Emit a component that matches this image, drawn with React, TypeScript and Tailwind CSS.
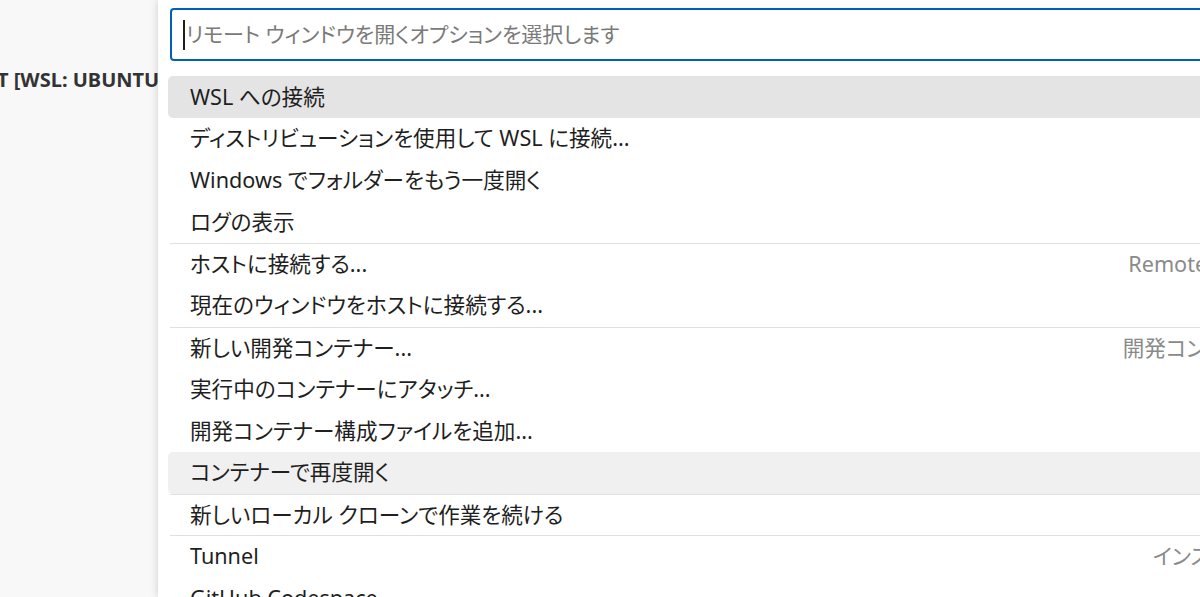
import React from 'react';

type Item = {
  label: string;
  detail?: string;
  sep?: boolean;
  bg?: string;
  dpr?: string;
};

const items: Item[] = [
  { label: 'WSL への接続', bg: 'bg-[#e4e4e4]' },
  { label: 'ディストリビューションを使用して WSL に接続...' },
  { label: 'Windows でフォルダーをもう一度開く' },
  { label: 'ログの表示' },
  { label: 'ホストに接続する...', detail: 'Remote - SSH', sep: true, dpr: '-mr-[3px]' },
  { label: '現在のウィンドウをホストに接続する...' },
  { label: '新しい開発コンテナー...', detail: '開発コンテナー', sep: true, dpr: '-mr-[5px]' },
  { label: '実行中のコンテナーにアタッチ...' },
  { label: '開発コンテナー構成ファイルを追加...' },
  { label: 'コンテナーで再度開く', bg: 'bg-[#f0f0f0]' },
  { label: '新しいローカル クローンで作業を続ける', sep: true },
  { label: 'Tunnel', detail: 'インストール', sep: true, dpr: '-mr-[6px]' },
  { label: 'GitHub Codespace' },
];

function Row({ item }: { item: Item }) {
  return (
    <div className={`h-[41.75px] ${item.sep ? 'border-t border-[#e0e0e0] ml-[2px]' : ''}`}>
      <div
        className={`h-full flex items-center rounded-[5px] pl-[22px] pr-[6px] ${item.sep ? '-ml-[2px]' : ''} ${item.bg ?? ''}`}
      >
        <span className="whitespace-nowrap text-[#1f1f1f]">{item.label}</span>
        {item.detail && (
          <span className={`ml-auto whitespace-nowrap text-[#8a8a8a] ${item.dpr ?? ''}`}>
            {item.detail}
          </span>
        )}
      </div>
    </div>
  );
}

export default function App() {
  return (
    <div
      className="w-[1200px] h-[597px] overflow-hidden flex bg-[#f8f8f8] [font-feature-settings:'palt'] text-[21.6px]"
      style={{ fontFamily: '"Noto Sans", "Noto Sans CJK JP", sans-serif' }}
    >
      {/* sidebar behind the quick pick */}
      <div className="w-[158px] shrink-0 overflow-hidden">
        <div className="mt-[65px] -ml-[3px] whitespace-nowrap font-bold text-[20px] text-[#333333]">
          T [WSL: UBUNTU]
        </div>
      </div>

      {/* quick pick */}
      <div className="w-[1120px] shrink-0 bg-white shadow-[0_0_8px_rgba(0,0,0,0.18)] px-[10px] pt-[8px]">
        <div className="ml-[2px] h-[53px] border-2 border-[#005fb8] rounded-[4px] flex items-center pl-[11px]">
          <span className="w-[2px] h-[30px] bg-[#1f1f1f]" />
          <span className="ml-[1px] whitespace-nowrap text-[21px] text-[#7a7a7a]">
            リモート ウィンドウを開くオプションを選択します
          </span>
        </div>
        <div className="mt-[15px]">
          {items.map((it, i) => (
            <Row key={i} item={it} />
          ))}
        </div>
      </div>
    </div>
  );
}
